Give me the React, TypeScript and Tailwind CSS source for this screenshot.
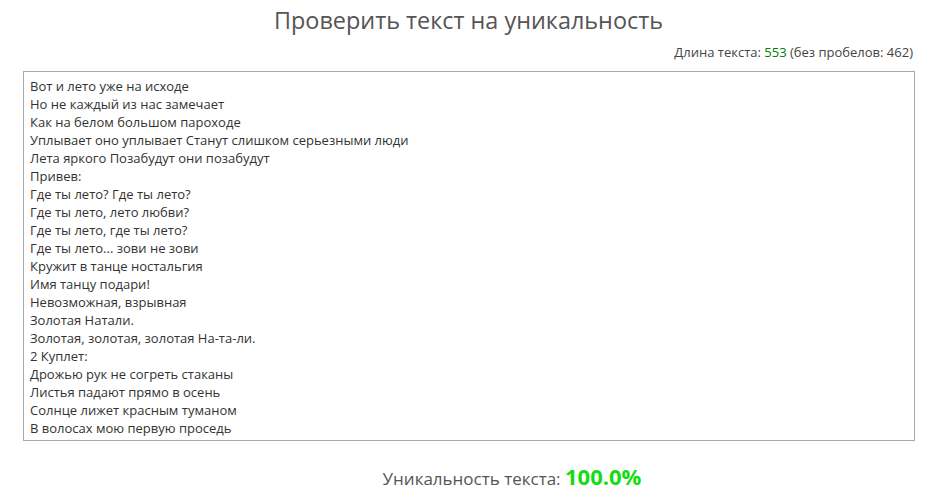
const TEXT = `Вот и лето уже на исходе
Но не каждый из нас замечает
Как на белом большом пароходе
Уплывает оно уплывает Станут слишком серьезными люди
Лета яркого Позабудут они позабудут
Привев:
Где ты лето? Где ты лето?
Где ты лето, лето любви?
Где ты лето, где ты лето?
Где ты лето... зови не зови
Кружит в танце ностальгия
Имя танцу подари!
Невозможная, взрывная
Золотая Натали.
Золотая, золотая, золотая На-та-ли.
2 Куплет:
Дрожью рук не согреть стаканы
Листья падают прямо в осень
Солнце лижет красным туманом
В волосах мою первую проседь`

export default function App() {
  return (
    <div
      className="w-[937px] h-[500px] bg-white px-[23px] overflow-hidden"
      style={{ fontFamily: '"Open Sans", "Noto Sans", sans-serif' }}
    >
      <h1 className="text-center text-[23.4px] leading-[32px] text-[#555] pt-[4px]">
        Проверить текст на уникальность
      </h1>

      <div className="text-right text-[13px] leading-[18px] text-[#444] mt-[7px] pr-[1px]">
        Длина текста: <span className="text-[#008000]">553</span> (без пробелов: 462)
      </div>

      <textarea
        readOnly
        defaultValue={TEXT}
        className="block w-[892px] h-[370px] mt-[10px] border border-[#a9a9a9] px-[6px] py-[5px] text-[13px] leading-[18px] text-[#333] resize-none outline-none"
      />

      <div className="text-center pl-[87px] mt-[19px] text-[17px] text-[#555] leading-[32px]">
        Уникальность текста:{' '}
        <span className="text-[22px] font-bold text-[#11dd11]">100.0%</span>
      </div>
    </div>
  )
}
